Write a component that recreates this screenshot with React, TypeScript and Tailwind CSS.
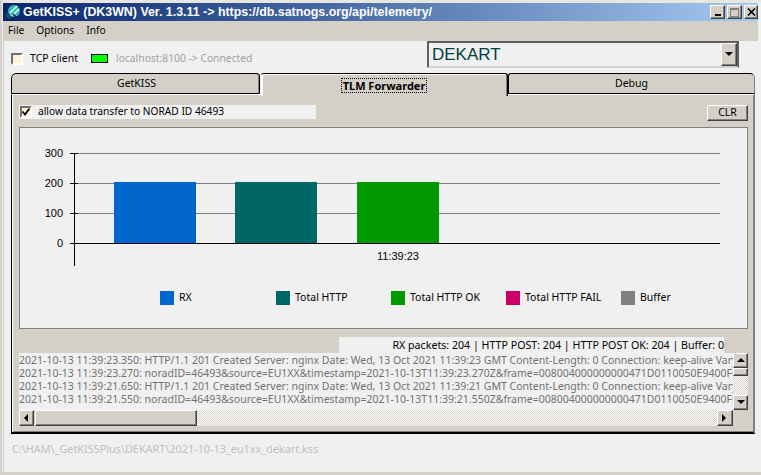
import React from 'react';

const raised = 'border border-t-white border-l-white border-r-[#404040] border-b-[#404040] bg-[#d4d0c8] shadow-[inset_-1px_-1px_0_#808080]';
const dither = 'bg-[repeating-conic-gradient(#d4d0c8_0_25%,#ffffff_0_50%)] bg-[length:2px_2px]';

const logLines = [
  '2021-10-13 11:39:23.350: HTTP/1.1 201 Created Server: nginx Date: Wed, 13 Oct 2021 11:39:23 GMT Content-Length: 0 Connection: keep-alive Vary: Accept',
  '2021-10-13 11:39:23.270: noradID=46493&source=EU1XX&timestamp=2021-10-13T11:39:23.270Z&frame=008004000000000471D0110050E9400FC0000000',
  '2021-10-13 11:39:21.650: HTTP/1.1 201 Created Server: nginx Date: Wed, 13 Oct 2021 11:39:21 GMT Content-Length: 0 Connection: keep-alive Vary: Accept',
  '2021-10-13 11:39:21.550: noradID=46493&source=EU1XX&timestamp=2021-10-13T11:39:21.550Z&frame=008004000000000471D0110050E9400FC0000000',
];

const legend = [
  { label: 'RX', color: 'bg-[#0066cc]', width: 'w-[116px]' },
  { label: 'Total HTTP', color: 'bg-[#006666]', width: 'w-[115px]' },
  { label: 'Total HTTP OK', color: 'bg-[#009900]', width: 'w-[115px]' },
  { label: 'Total HTTP FAIL', color: 'bg-[#cc0066]', width: 'w-[115px]' },
  { label: 'Buffer', color: 'bg-[#808080]', width: 'w-[70px]' },
];

function Arrow({ dir }: { dir: 'up' | 'down' | 'left' | 'right' }) {
  const points = {
    up: '4,1 0,5 8,5',
    down: '0,1 8,1 4,5',
    left: '5,0 5,8 1,4',
    right: '1,0 1,8 5,4',
  }[dir];
  return (
    <svg width="8" height="8" viewBox="0 0 8 8" className="block">
      <polygon points={points} fill="#000" />
    </svg>
  );
}

function ScrollButton({ dir, className = '' }: { dir: 'up' | 'down' | 'left' | 'right'; className?: string }) {
  return (
    <div className={`${raised} flex items-center justify-center shrink-0 ${className}`}>
      <Arrow dir={dir} />
    </div>
  );
}

function Check({ checked }: { checked?: boolean }) {
  return (
    <div className="w-[12px] h-[12px] shrink-0 bg-[#fff2d8] border-2 border-t-[#707070] border-l-[#707070] border-r-white border-b-white flex items-center justify-center">
      {checked && (
        <svg width="10" height="10" viewBox="0 0 10 10" className="shrink-0">
          <path d="M1.5 4.5 L4 7.5 L8.5 1.5" stroke="#000" strokeWidth="1.8" fill="none" />
        </svg>
      )}
    </div>
  );
}

function AppIcon() {
  return (
    <svg width="16" height="16" viewBox="0 0 16 16" className="shrink-0">
      <circle cx="9" cy="7" r="6" fill="#35b5b5" />
      <path d="M5 9 L12 2 M7 12 L14 5" stroke="#d8f8f4" strokeWidth="1.6" />
      <path d="M1 8 L7 14 L4 15 L1 12 Z" fill="#1a5060" />
      <path d="M8 10 L12 14" stroke="#102838" strokeWidth="1.5" />
    </svg>
  );
}

function Chart() {
  const gridY = [153.5, 183.5, 213.5];
  const bars = [
    { x: 114, fill: '#0066cc' },
    { x: 235, fill: '#006666' },
    { x: 357, fill: '#009900' },
  ];
  const labels = [
    { y: 153, t: '300' },
    { y: 183, t: '200' },
    { y: 213, t: '100' },
    { y: 243, t: '0' },
  ];
  // coordinates are relative to the window; the box starts at 20,128
  return (
    <svg width="726" height="138" viewBox="20 128 726 138" className="block shrink-0">
      {gridY.map((y) => (
        <line key={y} x1="74" x2="720" y1={y} y2={y} stroke="#808080" />
      ))}
      {bars.map((b) => (
        <rect key={b.x} x={b.x} y="182" width="82" height="61" fill={b.fill} />
      ))}
      <line x1="74.5" x2="74.5" y1="153" y2="269" stroke="#000" />
      <line x1="70" x2="720" y1="243.5" y2="243.5" stroke="#000" />
      {gridY.map((y) => (
        <line key={y} x1="70" x2="78" y1={y} y2={y} stroke="#000" />
      ))}
      {labels.map((l) => (
        <text key={l.t} x="63" y={l.y + 4} textAnchor="end" fontSize="11" fontFamily="'Liberation Sans', sans-serif" fill="#000">
          {l.t}
        </text>
      ))}
      <text x="398" y="260" textAnchor="middle" fontSize="11" fontFamily="'Liberation Sans', sans-serif" fill="#000">
        11:39:23
      </text>
    </svg>
  );
}

export default function App() {
  return (
    <div className="w-[761px] h-[475px] overflow-hidden bg-[#f0f0f0] font-['Noto_Sans',sans-serif] text-[10.5px] text-black flex flex-col border-l-2 border-l-[#d4d0c8] border-b-[3px] border-b-[#d4d0c8]">
      {/* Window frame top + title bar */}
      <div className="h-[3px] shrink-0 bg-[#e8e6e0]" />
      <div className="ml-[1px] mr-[3px] h-[18px] shrink-0 flex items-center pl-[2px] bg-gradient-to-r from-[#0a246a] to-[#a6caf0]">
        <AppIcon />
        <span className="ml-[2px] font-['Liberation_Sans',sans-serif] font-bold text-[12.4px] text-white whitespace-nowrap flex-1">
          GetKISS+ (DK3WN) Ver. 1.3.11 -&gt; https://db.satnogs.org/api/telemetry/
        </span>
        <div className="flex items-center">
          <div className={`${raised} w-[15px] h-[14px] flex items-end justify-center pb-[2px]`}>
            <div className="w-[6px] h-[2px] bg-black" />
          </div>
          <div className={`${raised} w-[15px] h-[14px] ml-[2px] flex items-center justify-center`}>
            <div className="w-[9px] h-[9px] border border-t-2 border-[#808080]" />
          </div>
          <div className={`${raised} w-[14px] h-[14px] ml-[2px] flex items-center justify-center`}>
            <svg width="9" height="8" viewBox="0 0 9 8">
              <path d="M1 0.5 L8 7.5 M8 0.5 L1 7.5" stroke="#000" strokeWidth="1.6" />
            </svg>
          </div>
        </div>
      </div>

      {/* Menu */}
      <div className="ml-[1px] mr-[3px] h-[20px] shrink-0 bg-[#d4d0c8] flex items-center gap-[12px] pl-[5px] text-[10.2px]">
        <span>File</span>
        <span>Options</span>
        <span>Info</span>
      </div>

      <div className="flex-1 min-h-0 flex flex-col ml-[1px] mr-[3px] border-l border-l-[#d4d0c8]">
        {/* Connection row */}
        <div className="h-[32px] shrink-0 flex items-start">
          <div className="flex items-center pl-[7px] pt-[10px] w-[423px]">
            <Check />
            <span className="ml-[7px] w-[61px]">TCP client</span>
            <div className="w-[17px] h-[9px] bg-[#00ff00] border border-black" />
            <span className="ml-[8px] text-[10.3px] text-[#a0a0a0]">localhost:8100 -&gt; Connected</span>
          </div>
          <div className="w-[312px] h-[27px] bg-[#f0f0f0] border-2 border-t-[#606060] border-l-[#606060] border-r-[#606060] border-b-[#d4d0c8] flex items-center">
            <span className="flex-1 pl-[3px] font-['Liberation_Sans',sans-serif] text-[17px] text-[#004040]">DEKART</span>
            <div className={`${raised} w-[16px] h-[23px] flex items-center justify-center`}>
              <Arrow dir="down" />
            </div>
          </div>
        </div>

        {/* Tabs */}
        <div className="ml-[7px] w-[744px] h-[21px] shrink-0 flex text-center relative z-10">
          <div className="w-[249px] h-[21px] bg-[#d4d0c8] border border-black rounded-tl-[5px] rounded-tr-[3px] shadow-[inset_-1px_0_0_#808080] leading-[19px] pl-[2px]">
            GetKISS
          </div>
          <div className="w-[247px] h-[23px] ml-[1px] bg-[#d4d0c8] border-t border-t-black border-r border-r-black rounded-tl-[3px] rounded-tr-[3px] shadow-[inset_2px_1px_0_#ffffff,inset_-1px_0_0_#808080] flex items-center justify-center">
            <span className="font-bold text-[11px] border border-dotted border-black px-[1px] leading-[13px]">TLM Forwarder</span>
          </div>
          <div className="flex-1 h-[21px] bg-[#d4d0c8] border border-black rounded-tl-[3px] rounded-tr-[5px] border-r-[#808080] leading-[19px]">
            Debug
          </div>
        </div>

        {/* Tab panel */}
        <div className="ml-[7px] w-[744px] h-[340px] shrink-0 bg-[#d4d0c8] border-l border-l-black border-b-2 border-b-black border-t border-t-white border-r-2 border-r-[#808080] shadow-[inset_1px_0_0_#ffffff,inset_0_-1px_0_#808080] flex flex-col pl-[7px] pr-[5px]">
          <div className="flex items-center justify-between h-[16px] mt-[10px] shrink-0">
            <div className="w-[297px] h-[14px] bg-[#f0f0f0] flex items-center pl-[1px] self-start">
              <Check checked />
              <span className="ml-[6px] text-[10.2px]">allow data transfer to NORAD ID 46493</span>
            </div>
            <div className={`${raised} w-[41px] h-[16px] flex items-center justify-center`}>CLR</div>
          </div>

          {/* Chart box */}
          <div className="mt-[6px] h-[202px] w-[729px] shrink-0 bg-[#f0f0f0] border border-[#808080] flex flex-col">
            <Chart />
            <div className="flex items-center mt-[24px] pl-[140px]">
              {legend.map((l) => (
                <div key={l.label} className={`flex items-center ${l.width}`}>
                  <div className={`w-[14px] h-[14px] shrink-0 ${l.color}`} />
                  <span className="ml-[5px] whitespace-nowrap">{l.label}</span>
                </div>
              ))}
            </div>
          </div>

          {/* Counters */}
          <div className="mt-[8px] ml-[320px] w-[385px] h-[16px] shrink-0 bg-[#f0f0f0] text-right text-[10.65px] whitespace-nowrap leading-[16px]">
            RX packets: 204 | HTTP POST: 204 | HTTP POST OK: 204 | Buffer: 0
          </div>

          {/* Log + scrollbars */}
          <div className="w-[729px] flex shrink-0">
            <div className="w-[714px] h-[57px] bg-[#f0f0f0] overflow-hidden text-[#707070] leading-[13px] pt-[1px] whitespace-nowrap">
              {logLines.map((line) => (
                <div key={line}>{line}</div>
              ))}
            </div>
            <div className="w-[15px] h-[57px] flex flex-col bg-[#f0f0f0]">
              <ScrollButton dir="up" className="h-[15px]" />
              <div className={`${raised} h-[8px]`} />
              <div className={`flex-1 ${dither}`} />
              <ScrollButton dir="down" className="h-[15px]" />
            </div>
          </div>
          <div className="w-[714px] h-[16px] shrink-0 flex">
            <ScrollButton dir="left" className="w-[15px]" />
            <div className={`${raised} w-[162px] ml-[1px]`} />
            <div className={`flex-1 ${dither}`} />
            <ScrollButton dir="right" className="w-[16px]" />
          </div>
        </div>

        {/* File path */}
        <div className="pl-[8px] mt-[7px] text-[10.85px] text-[#c0c0c0]">C:\HAM\_GetKISSPlus\DEKART\2021-10-13_eu1xx_dekart.kss</div>
      </div>
    </div>
  );
}
